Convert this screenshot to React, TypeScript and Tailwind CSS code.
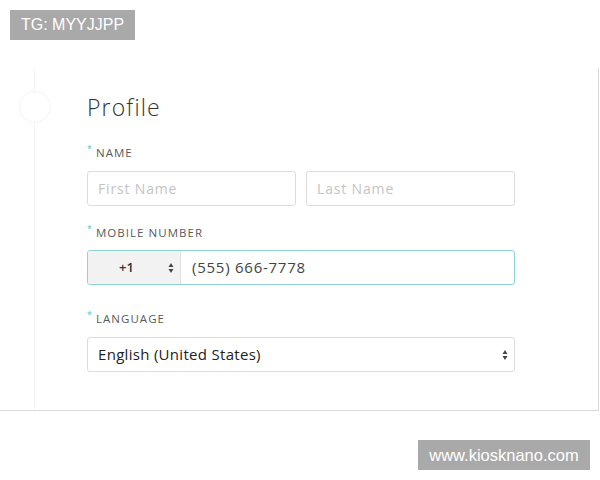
import React from "react";

const Label = ({ text, mb }: { text: string; mb: string }) => (
  <div className={`flex items-start gap-[4px] h-[14px] ${mb}`}>
    <span className="text-[#4fc3cf] text-[9px] leading-[6px]">*</span>
    <span className="text-[11.5px] leading-[14px] tracking-[0.09em] text-[#5a5a5a] uppercase">
      {text}
    </span>
  </div>
);

const Arrows = () => (
  <svg width="6" height="12" viewBox="0 0 6 12" className="text-[#444]">
    <path d="M3 1 L5.5 5 H0.5 Z" fill="currentColor" />
    <path d="M3 11 L5.5 7 H0.5 Z" fill="currentColor" />
  </svg>
);

const App = () => {
  return (
    <div
      className="relative w-[600px] h-[480px] bg-white overflow-hidden"
      style={{ fontFamily: '"Open Sans", "Liberation Sans", sans-serif' }}
    >
      <div className="absolute left-[10px] top-[10px] w-[125px] h-[30px] bg-[#a9a9a9] flex items-center justify-center text-white text-[16px]" style={{ fontFamily: '"Liberation Sans", Arial, sans-serif' }}>
        TG: MYYJJPP
      </div>

      <div className="absolute left-0 top-[68px] w-[599px] h-[343px] border-r border-b border-[#d9d9d9] flex">
        <div className="relative w-[87px] shrink-0">
          <div className="absolute left-[34px] top-0 bottom-0 w-px bg-[#f5f5f5]" />
          <div className="absolute left-[19px] top-[23px] w-[32px] h-[32px] rounded-full border border-[#f4f4f4] bg-white" />
        </div>

        <div className="w-[428px] pt-[26px]">
          <h1 className="text-[23px] leading-[26px] font-light text-[#333] tracking-[0.05em] mb-[26px]">
            Profile
          </h1>

          <Label text="Name" mb="mb-[11px]" />
          <div className="flex gap-[10px] mb-[20px]">
            <div className="flex-1 h-[35px] border border-[#dcdcdc] rounded-[3px] flex items-center px-[10px] text-[14px] tracking-[0.06em] text-[#c4c4c4]">
              First Name
            </div>
            <div className="flex-1 h-[35px] border border-[#dcdcdc] rounded-[3px] flex items-center px-[10px] text-[14px] tracking-[0.06em] text-[#c4c4c4]">
              Last Name
            </div>
          </div>

          <Label text="Mobile Number" mb="mb-[10px]" />
          <div className="flex h-[35px] border border-[#8fd3da] rounded-[3px] overflow-hidden mb-[27px]">
            <div className="w-[93px] bg-[#f2f2f2] border-r border-[#e0e0e0] flex items-center pl-[31px] pr-[6px]">
              <span className="text-[13px] font-semibold text-[#333]">+1</span>
              <span className="ml-auto flex"><Arrows /></span>
            </div>
            <div className="flex-1 flex items-center pl-[11px] text-[15px] tracking-[0.05em] text-[#444]">
              (555) 666-7778
            </div>
          </div>

          <Label text="Language" mb="mb-[11px]" />
          <div className="h-[35px] border border-[#dcdcdc] rounded-[3px] flex items-center pl-[10px] pr-[6px] text-[15px] tracking-[0.02em] text-[#222]">
            English (United States)
            <span className="ml-auto flex"><Arrows /></span>
          </div>
        </div>
      </div>

      <div className="absolute left-[418px] top-[440px] w-[172px] h-[30px] bg-[#a9a9a9] flex items-center justify-center text-white text-[16.5px]" style={{ fontFamily: '"Liberation Sans", Arial, sans-serif' }}>
        www.kiosknano.com
      </div>
    </div>
  );
};

export default App;
